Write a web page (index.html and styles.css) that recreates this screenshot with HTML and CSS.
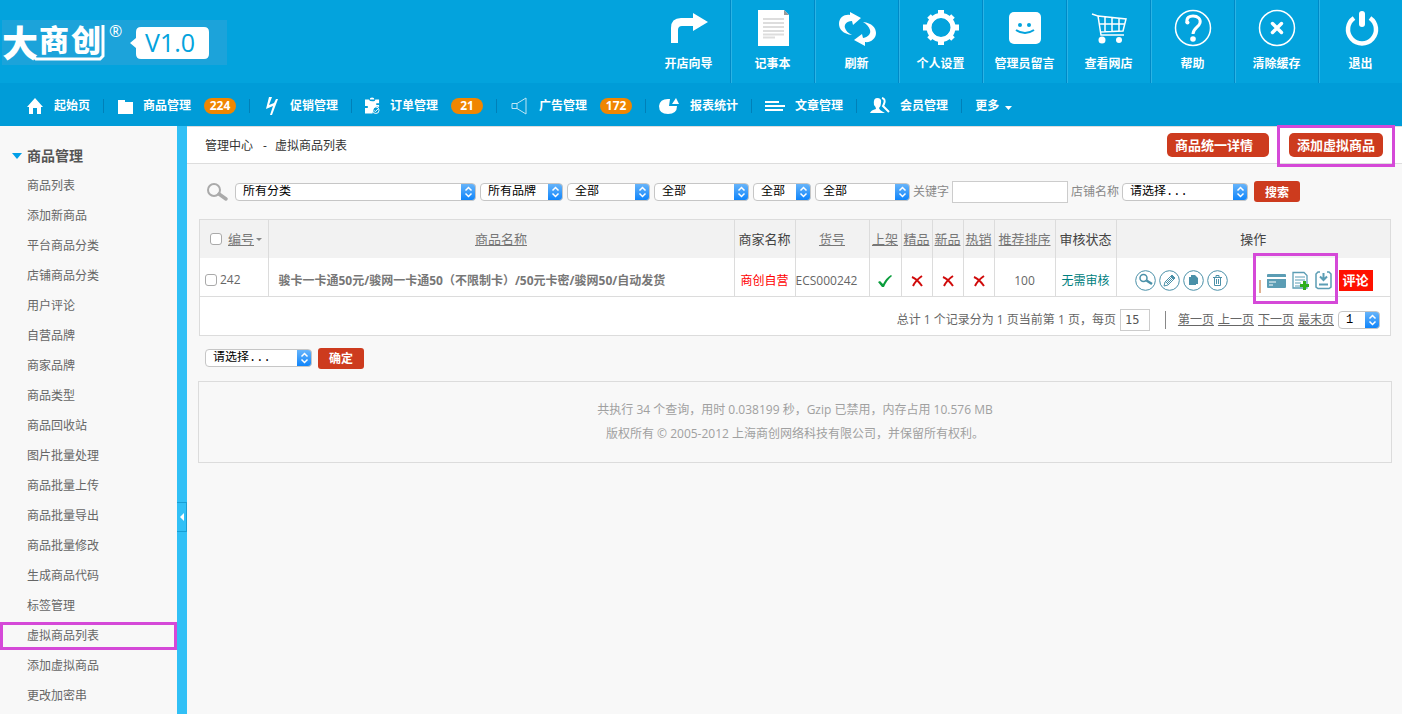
FILE: index.html
```html
<!DOCTYPE html>
<html lang="zh-CN">
<head>
    <meta charset="UTF-8">
    <meta name="viewport" content="width=device-width, initial-scale=1.0">
    <title>虚拟商品列表</title>
    <link rel="stylesheet" href="styles.css">
</head>
<body>

<header class="header">
    <div class="logo">
        <svg width="227" height="60" viewBox="0 0 227 60">
            <rect x="2" y="2" width="225" height="45" fill="#1ca3da"/>
            <text x="2" y="39" class="logo-big">大</text>
            <text x="39" y="33" class="logo-small">商</text>
            <text x="71" y="33" class="logo-small">创</text>
            <path d="M30 35l6 6h64l3-3V7" fill="none" stroke="#fff" stroke-width="3"/>
            <text x="109" y="19" class="logo-reg">®</text>
            <path d="M130 25l6-5V14q0-5 5-5h63q5 0 5 5v22q0 5-5 5h-63q-5 0-5-5v-6z" fill="#fff"/>
            <text x="145" y="34" class="logo-ver">V1.0</text>
        </svg>
    </div>
    <ul class="tools">
        <li><a href="#">
            <svg width="38" height="38" viewBox="0 0 38 38" fill="#fff"><path d="M1 34V19Q1 9 11 9H23V4L38 13 23 22V17H12Q8 17 8 21V34z"/></svg>
            <span>开店向导</span></a></li>
        <li><a href="#">
            <svg width="38" height="38" viewBox="0 0 38 38"><path d="M4 1H30L35 6V37H4z" fill="#fff"/><path d="M30 1V6H35z" fill="#999"/><path d="M9 10H30M9 14H30M9 18H30M9 22H30M9 25.500H30M9 28.500H21" stroke="#ddd" stroke-width="2"/></svg>
            <span>记事本</span></a></li>
        <li><a href="#">
            <svg width="38" height="38" viewBox="0 0 38 38" fill="#fff"><path d="M14 26C5 25 1 20 1 15 1 8 7 5 12 6L12 3 23 9 15 16 14 12C8 12 6 16 7 19 8 22 10 24 14 26z"/><path d="M25 13C34 14 38 19 38 24 38 30 32 34 27 33L27 37 16 31 24 25 25 29C31 28 33 24 32 21 31 18 29 15 25 13z"/></svg>
            <span>刷新</span></a></li>
        <li><a href="#">
            <svg width="38" height="38" viewBox="0 0 38 38"><g stroke="#fff" stroke-width="6"><path d="M19 1V9M19 29V36M1 18.500H9M29 18.500H37"/><path d="M7 7L12 12M26 25L31 30M7 30L12 25M26 12L31 7" stroke-width="5"/></g><circle cx="19" cy="18.500" r="12" fill="none" stroke="#fff" stroke-width="5"/></svg>
            <span>个人设置</span></a></li>
        <li><a href="#">
            <svg width="38" height="38" viewBox="0 0 38 38"><rect x="3" y="3" width="32" height="32" rx="5" fill="#fff"/><circle cx="14" cy="16" r="2" fill="#03a3dd"/><circle cx="23" cy="16" r="2" fill="#03a3dd"/><path d="M10 21Q19 27 28 21" fill="none" stroke="#03a3dd" stroke-width="2"/></svg>
            <span>管理员留言</span></a></li>
        <li><a href="#">
            <svg width="38" height="38" viewBox="0 0 38 38" fill="none" stroke="#fff" stroke-width="1.500"><path d="M2 5L8 7 11 26H34M8 7L36 10 33 22 10 23M9 15H35M15 8V23M22 9V23M29 9V22" /><circle cx="12" cy="31" r="3.500" fill="#fff" stroke="none"/><circle cx="29" cy="31" r="3" fill="#fff" stroke="none"/></svg>
            <span>查看网店</span></a></li>
        <li><a href="#">
            <svg width="38" height="38" viewBox="0 0 38 38"><circle cx="19" cy="19" r="17.500" fill="none" stroke="#fff" stroke-width="1.500"/><path d="M13 14C12 8 16 7 19 7 24 7 27 10 26 14 25 18 19 19 19 25" fill="none" stroke="#fff" stroke-width="3"/><circle cx="13.500" cy="13.500" r="2" fill="#fff"/><circle cx="19" cy="30" r="2.800" fill="#fff"/></svg>
            <span>帮助</span></a></li>
        <li><a href="#">
            <svg width="38" height="38" viewBox="0 0 38 38" fill="none" stroke="#fff"><circle cx="19" cy="19" r="17.500" stroke-width="1.500"/><path d="M14.500 14.500L23.500 23.500M23.500 14.500L14.500 23.500" stroke-width="3.500" stroke-linecap="round"/></svg>
            <span>清除缓存</span></a></li>
        <li><a href="#">
            <svg width="38" height="38" viewBox="0 0 38 38" fill="none" stroke="#fff"><path d="M12 9A14 14 0 1 0 28 9" stroke-width="4.500"/><path d="M20 5V15" stroke-width="6" stroke-linecap="round"/></svg>
            <span>退出</span></a></li>
    </ul>
</header>

<nav class="nav">
    <a href="#"><svg width="19" height="18" viewBox="0 0 19 18" fill="#fff"><path d="M10 1L18 10H16V17H12V11H8V17H4V10H2z"/></svg>起始页</a>
    <a href="#"><svg width="16" height="18" viewBox="0 0 16 18" fill="#fff"><path d="M1 3H8V5H16V17H1z"/></svg>商品管理<span class="badge">224</span></a>
    <a href="#"><svg width="17" height="18" viewBox="0 0 17 18" fill="#fff"><path d="M6 0H9L6 8 11 6 13 2 15 2 9 18 7 18 10 9 3 12z"/></svg>促销管理</a>
    <a href="#"><svg width="15" height="18" viewBox="0 0 16 18"><path d="M0 2H4Q5 4 8 4T11 2H15V6H12V8H15V10Q9 8 8 17H0V11H3V9H0z" fill="#fff"/><path d="M5 2Q5 0 7.500 0T10 2z" fill="#fff"/><circle cx="11.500" cy="13.500" r="3.500" fill="none" stroke="#fff"/><path d="M9.500 13.500L11 15 14 12" fill="none" stroke="#fff"/></svg>订单管理<span class="badge">21</span></a>
    <a href="#"><svg width="19" height="18" viewBox="0 0 19 18" fill="none" stroke="#bfe6f5"><path d="M2 6.500H7L16 1V17L7 11.500H2zM7 6.500V11.500"/></svg>广告管理<span class="badge">172</span></a>
    <a href="#"><svg width="21" height="18" viewBox="0 0 21 18" fill="#fff"><path d="M11 2Q1 1 0 9 0 17 9 17 18 17 18 9L10 9z"/><path d="M13 7L17 1 20 7z"/></svg>报表统计</a>
    <a href="#"><svg width="20" height="18" viewBox="0 0 20 18" stroke="#fff" stroke-width="2"><path d="M0 5H14M0 9H20M0 13H18"/></svg>文章管理</a>
    <a href="#"><svg width="20" height="18" viewBox="0 0 20 18"><path d="M7 1Q12 1 11 6 11 9 9 11 9 13 15 16H0Q1 13 6 12 6 10 4 8 3 1 7 1z" fill="#fff"/><path d="M12 1Q16 2 14 7L13 9 19 15" fill="none" stroke="#fff" stroke-width="2"/></svg>会员管理</a>
    <a href="#">更多<svg class="caret" width="7" height="4" viewBox="0 0 7 4" fill="#fff"><path d="M0 0H7L3.500 4z"/></svg></a>
</nav>

<div class="layout">
    <aside class="sidebar">
        <h2>商品管理</h2>
        <ul>
            <li><a href="#">商品列表</a></li>
            <li><a href="#">添加新商品</a></li>
            <li><a href="#">平台商品分类</a></li>
            <li><a href="#">店铺商品分类</a></li>
            <li><a href="#">用户评论</a></li>
            <li><a href="#">自营品牌</a></li>
            <li><a href="#">商家品牌</a></li>
            <li><a href="#">商品类型</a></li>
            <li><a href="#">商品回收站</a></li>
            <li><a href="#">图片批量处理</a></li>
            <li><a href="#">商品批量上传</a></li>
            <li><a href="#">商品批量导出</a></li>
            <li><a href="#">商品批量修改</a></li>
            <li><a href="#">生成商品代码</a></li>
            <li><a href="#">标签管理</a></li>
            <li class="marked"><a href="#">虚拟商品列表</a></li>
            <li><a href="#">添加虚拟商品</a></li>
            <li><a href="#">更改加密串</a></li>
        </ul>
    </aside>
    <div class="splitter"><button type="button" class="toggle" aria-label="收起菜单"></button></div>

    <main class="main">
        <div class="crumbs">
            <h1><a href="#">管理中心</a><span>-</span><span>虚拟商品列表</span></h1>
            <div class="actions">
                <a href="#" class="action wide">商品统一详情</a>
                <span class="marked"><a href="#" class="action">添加虚拟商品</a></span>
            </div>
        </div>

        <form class="search">
            <svg width="25" height="20" viewBox="0 0 25 20" fill="none" stroke="#aaa"><circle cx="8" cy="8" r="6" stroke-width="2"/><path d="M13 12L20 17" stroke-width="3.500" stroke-linecap="round"/></svg>
            <select class="w-category" aria-label="分类"><option>所有分类</option></select>
            <select class="w-medium" aria-label="品牌"><option>所有品牌</option></select>
            <select class="w-medium" aria-label="推荐"><option>全部</option></select>
            <select class="w-large" aria-label="商家"><option>全部</option></select>
            <select class="w-small" aria-label="上架"><option>全部</option></select>
            <select class="w-large" aria-label="审核"><option>全部</option></select>
            <label for="keyword">关键字</label>
            <input type="text" id="keyword" class="keyword">
            <label for="store">店铺名称</label>
            <select id="store" class="w-store"><option>请选择...</option></select>
            <button type="submit" class="button">搜索</button>
        </form>

        <div class="panel">
            <table class="goods">
                <colgroup>
                    <col class="c-id"><col><col class="c-mid"><col class="c-sn">
                    <col class="c-shelf"><col class="c-flag"><col class="c-flag"><col class="c-flag">
                    <col class="c-mid"><col class="c-mid"><col class="c-ops">
                </colgroup>
                <thead>
                    <tr>
                        <th class="id"><div><input type="checkbox" aria-label="全选"><a href="#">编号</a><i class="sort"></i></div></th>
                        <th><a href="#">商品名称</a></th>
                        <th>商家名称</th>
                        <th><a href="#">货号</a></th>
                        <th><a href="#">上架</a></th>
                        <th><a href="#">精品</a></th>
                        <th><a href="#">新品</a></th>
                        <th><a href="#">热销</a></th>
                        <th><a href="#">推荐排序</a></th>
                        <th>审核状态</th>
                        <th>操作</th>
                    </tr>
                </thead>
                <tbody>
                    <tr>
                        <td class="id"><label><input type="checkbox">242</label></td>
                        <td class="name">骏卡一卡通50元/骏网一卡通50（不限制卡）/50元卡密/骏网50/自动发货</td>
                        <td class="shop">商创自营</td>
                        <td class="sn">ECS000242</td>
                        <td><svg class="flag" width="14" height="14" viewBox="0 0 14 14"><path d="M0 8L2 7 5 10Q8 4 13 1L14 2Q9 6 6 13L4 13z" fill="#0a9d3c"/></svg></td>
                        <td><svg class="flag" width="14" height="14" viewBox="0 0 14 14"><path d="M2 3Q7 5 12 12M12 2Q6 6 3 12" fill="none" stroke="#d00b0b" stroke-width="2"/></svg></td>
                        <td><svg class="flag" width="14" height="14" viewBox="0 0 14 14"><path d="M2 3Q7 5 12 12M12 2Q6 6 3 12" fill="none" stroke="#d00b0b" stroke-width="2"/></svg></td>
                        <td><svg class="flag" width="14" height="14" viewBox="0 0 14 14"><path d="M2 3Q7 5 12 12M12 2Q6 6 3 12" fill="none" stroke="#d00b0b" stroke-width="2"/></svg></td>
                        <td>100</td>
                        <td class="audit">无需审核</td>
                        <td>
                            <div class="ops">
                                <a href="#" aria-label="查看"><svg width="21" height="21" viewBox="0 0 21 21" fill="none" stroke="#4a90a8"><circle cx="10.500" cy="10.500" r="9.800"/><circle cx="8.500" cy="8" r="3.500" stroke-width="1.500"/><path d="M11.500 10.500L17 14" stroke-width="2.500"/></svg></a>
                                <a href="#" aria-label="编辑"><svg width="21" height="21" viewBox="0 0 21 21" fill="none" stroke="#4a90a8"><circle cx="10.500" cy="10.500" r="9.800"/><path d="M5 16L6 12 13 5 16 8 9 15zM7 13L14 6M8 14L15 7M12 6L15 9"/></svg></a>
                                <a href="#" aria-label="复制"><svg width="21" height="21" viewBox="0 0 21 21"><circle cx="10.500" cy="10.500" r="9.800" fill="none" stroke="#4a90a8"/><path d="M8 5H12L15 8V14H8z M6 7H8V14H13V15H6z" fill="#4a90a8"/></svg></a>
                                <a href="#" aria-label="删除"><svg width="21" height="21" viewBox="0 0 21 21" fill="none" stroke="#4a90a8"><circle cx="10.500" cy="10.500" r="9.800"/><path d="M6 7.500H15M9 7V5.500H12V7M7.500 8V15.500H13.500V8M9.500 9V14M11.500 9V14"/></svg></a>
                                <span class="marked">
                                    <i class="bar"></i>
                                    <a href="#" aria-label="补货"><svg width="19" height="16" viewBox="0 0 19 16"><path d="M0 2Q0 1 1 1H18Q19 1 19 2V4H0zM0 6H19V14Q19 15 18 15H1Q0 15 0 14z" fill="#5b9db4"/><path d="M2 9H9M2 12H6" stroke="#fff"/></svg></a>
                                    <a href="#" aria-label="添加卡密"><svg width="17" height="19" viewBox="0 0 17 19"><path d="M1 1.500H12L15 4.500V17H1z" fill="none" stroke="#5b9db4" stroke-width="1.300"/><path d="M3 6H13M3 9H13M3 12H9M3 15H8" stroke="#5b9db4"/><path d="M11 10H14V13H17V16H14V19H11V16H8V13H11z" fill="#2fae1c"/></svg></a>
                                    <a href="#" aria-label="批量导入"><svg width="17" height="19" viewBox="0 0 17 19" fill="none" stroke="#5b9db4" stroke-width="1.500"><path d="M5 1H3L1 3V16L3 17.500H14L16 16V3L14 1H12"/><path d="M8.500 2V8M5 5.500L8.500 9 12 5.500M4 13.500H13" stroke-width="2"/></svg></a>
                                </span>
                                <a href="#" class="review">评论</a>
                            </div>
                        </td>
                    </tr>
                </tbody>
            </table>
            <div class="pager">
                <label for="pageSize">总计 1 个记录分为 1 页当前第 1 页，每页</label>
                <input type="text" id="pageSize" class="page-size" value="15">
                <span class="pages">
                    <a href="#">第一页</a>
                    <a href="#">上一页</a>
                    <a href="#">下一页</a>
                    <a href="#">最末页</a>
                </span>
                <select class="w-page" aria-label="页码"><option>1</option></select>
            </div>
        </div>

        <form class="batch">
            <select class="w-batch" aria-label="批量操作"><option>请选择...</option></select>
            <button type="submit" class="button">确定</button>
        </form>

        <footer class="footer">
            <p>共执行 34 个查询，用时 0.038199 秒，Gzip 已禁用，内存占用 10.576 MB</p>
            <p>版权所有 © 2005-2012 上海商创网络科技有限公司，并保留所有权利。</p>
        </footer>
    </main>
</div>

</body>
</html>
```

FILE: styles.css
```css
* {
    box-sizing: border-box;
}
body {
    margin: 0;
    min-height: 100vh;
    display: flex;
    flex-direction: column;
    font-family: "Open Sans", "Noto Sans CJK SC", sans-serif;
    font-size: 12px;
    line-height: 18px;
    color: #666;
    background-color: #f8f8f8;
}
a {
    color: inherit;
    text-decoration: none;
}
ul, p, h1, h2 {
    margin: 0;
    padding: 0;
    list-style: none;
}
svg {
    display: block;
    flex: none;
}

/* top bar */
.header {
    display: flex;
    justify-content: space-between;
    height: 83px;
    background-color: #03a3dd;
    color: #fff;
}
.logo {
    padding-top: 18px;
}
.logo text {
    fill: #fff;
    font-weight: 900;
}
.logo .logo-big {
    font-size: 36px;
}
.logo .logo-small {
    font-size: 30px;
}
.logo .logo-reg {
    font-size: 16px;
    font-weight: 400;
}
.logo .logo-ver {
    font-size: 25px;
    font-weight: 400;
    fill: #03a3dd;
}
.tools {
    display: flex;
}
.tools li {
    width: 84px;
    border-left: 1px solid #0089c6;
    box-shadow: inset 1px 0 #2cb3e4;
}
.tools li:first-child {
    border-left-color: transparent;
    box-shadow: none;
}
.tools a {
    display: flex;
    flex-direction: column;
    align-items: center;
    gap: 8px;
    padding-top: 9px;
    font-weight: bold;
    white-space: nowrap;
}

/* main navigation */
.nav {
    display: flex;
    align-items: center;
    height: 43px;
    padding: 2px 0 0 12px;
    background-color: #009cd8;
    color: #fff;
    font-weight: bold;
}
.nav a {
    display: flex;
    align-items: center;
    height: 14px;
    padding: 0 13px;
    border-right: 1px solid #0080b8;
    white-space: nowrap;
}
.nav a:last-child {
    border-right: none;
}
.nav svg {
    margin-right: 10px;
}
.nav .caret {
    margin: 4px 0 0 6px;
}
.badge {
    width: 32px;
    margin-left: 13px;
    border-radius: 8px;
    background-color: #f08600;
    font-size: 12px;
    line-height: 16px;
    text-align: center;
}

/* sidebar */
.layout {
    display: flex;
    flex: 1;
}
.sidebar {
    width: 177px;
    padding-top: 15px;
    flex: none;
}
.sidebar h2 {
    display: flex;
    align-items: center;
    gap: 5px;
    padding-left: 12px;
    font-size: 14px;
    line-height: 30px;
    color: #555;
}
.sidebar h2::before {
    content: "";
    border: 5px solid transparent;
    border-top: 6px solid #009fe8;
    border-bottom: none;
}
.sidebar li {
    padding-left: 27px;
    line-height: 30px;
}
.marked {
    position: relative;
}
.marked::after {
    content: "";
    position: absolute;
    inset: 0;
    border: 3px solid #d549d8;
    pointer-events: none;
}
.sidebar .marked::after {
    inset: 1px 0;
}
.splitter {
    position: relative;
    width: 10px;
    flex: none;
    background-color: #31c0f6;
}
.toggle {
    position: absolute;
    top: 64%;
    width: 10px;
    height: 30px;
    padding: 0 0 0 3px;
    border: 1px solid #189fd5;
    border-left: none;
    background: none;
}
.toggle::before {
    content: "";
    display: block;
    border: 4px solid transparent;
    border-right-color: #fff;
    border-left: none;
    width: 0;
}

/* content */
.main {
    flex: 1;
    min-width: 0;
}
.crumbs {
    display: flex;
    align-items: center;
    justify-content: space-between;
    height: 38px;
    padding: 0 19px 0 18px;
    background-color: #fff;
    border-top: 1px solid #ddd;
    border-bottom: 1px solid #ddd;
}
.crumbs h1 {
    display: flex;
    gap: 8px;
    padding-top: 2px;
    font-size: 12px;
    font-weight: normal;
    color: #333;
}
.crumbs h1 a {
    margin-right: 2px;
}
.actions {
    display: flex;
    gap: 20px;
}
.action {
    display: block;
    padding: 0 8px;
    border-radius: 5px;
    background-color: #cd3b1e;
    color: #fff;
    font-size: 13px;
    font-weight: bold;
    line-height: 24px;
}
.wide {
    padding-right: 16px;
}
.actions .marked::after {
    inset: -8px -12px -10px;
}
select {
    height: 18px;
    padding: 1px 16px 0 7px;
    border: 1px solid #c6c6c6;
    border-radius: 4px;
    appearance: none;
    background: url("data:image/svg+xml,%3Csvg xmlns='http://www.w3.org/2000/svg' width='15' height='18' fill='none' stroke='white' stroke-width='1.500'%3E%3Cpath d='M4.500 7.500L7.500 4.500L10.500 7.500M4.500 10.500L7.500 13.500L10.500 10.500'/%3E%3C/svg%3E") right center / 15px 18px no-repeat border-box,
        linear-gradient(#6cb7fa, #0a82fb) right / 15px 100% no-repeat border-box,
        #fff;
    color: #000;
    font-family: "Liberation Mono", "Noto Sans CJK SC", monospace;
    font-size: 12px;
    line-height: 15px;
}
input[type="text"] {
    height: 22px;
    padding: 0 4px;
    border: 1px solid #ccc;
    background-color: #fff;
    color: #555;
    font-family: "DejaVu Sans Mono", monospace;
    font-size: 12px;
}
input[type="checkbox"] {
    width: 12px;
    height: 12px;
    margin: 0;
    border: 1px solid #aaa;
    border-radius: 3px;
    appearance: none;
    background-color: #fff;
}
.button {
    width: 46px;
    height: 21px;
    padding: 0;
    border: none;
    border-radius: 3px;
    background-color: #cd3b1e;
    color: #fff;
    font-family: inherit;
    font-size: 12px;
    font-weight: bold;
}
.search {
    display: flex;
    align-items: center;
    gap: 4px;
    height: 55px;
    padding: 0 11px 0 19px;
    color: #888;
}
.search label {
    margin: 0 -1px;
    white-space: nowrap;
}
.search .button {
    margin-left: 2px;
}
.w-category {
    width: 241px;
}
.w-medium {
    width: 83px;
}
.w-large {
    width: 95px;
}
.w-small {
    width: 58px;
}
.w-store {
    width: 126px;
}
.w-batch {
    width: 107px;
}
.w-page {
    width: 42px;
}
.keyword {
    width: 116px;
}

/* goods table */
.panel {
    margin: 0 11px 0 12px;
    border: 1px solid #dcdcdc;
    background-color: #fff;
}
.goods {
    width: 100%;
    table-layout: fixed;
    border-collapse: collapse;
}
.c-id {
    width: 68px;
}
.c-mid {
    width: 61px;
}
.c-sn {
    width: 74px;
}
.c-shelf {
    width: 32px;
}
.c-flag {
    width: 31px;
}
.c-ops {
    width: 274px;
}
.goods th,
.goods td {
    padding: 0;
    border-right: 1px solid #dcdcdc;
    text-align: center;
    white-space: nowrap;
}
.goods th:last-child,
.goods td:last-child {
    border-right: none;
}
.goods th {
    height: 38px;
    background-color: #f2f2f2;
    color: #444;
    font-size: 13px;
    font-weight: normal;
}
.goods th a {
    color: #777;
    text-decoration: underline;
}
.goods td {
    height: 38px;
    padding-top: 8px;
    border-bottom: 1px solid #dcdcdc;
}
.goods th.id div {
    display: flex;
    align-items: center;
    gap: 6px;
    padding-left: 10px;
}
.sort {
    margin-left: -4px;
    border: 3px solid transparent;
    border-top-color: #888;
    border-bottom: none;
}
.goods td.id {
    padding-top: 6px;
}
.goods .id label {
    display: flex;
    align-items: center;
    gap: 3px;
    padding-left: 5px;
}
.goods .name {
    padding-left: 10px;
    text-align: left;
    font-weight: bold;
    color: #777;
}
.goods .shop {
    color: #f00;
}
.goods .sn {
    text-align: left;
}
.goods .audit {
    color: #008080;
}
.flag {
    margin: 0 auto;
}
.ops {
    display: flex;
    align-items: center;
    gap: 3px;
    padding-left: 18px;
}
.ops .marked {
    display: flex;
    align-items: center;
    gap: 6px;
    padding: 0 4px;
    margin-left: 24px;
}
.ops .marked::after {
    inset: -15px -2px -11px;
}
.bar {
    flex: none;
    width: 2px;
    height: 13px;
    margin-top: 12px;
    background-color: #e0b090;
}
.review {
    padding: 0 4px;
    background-color: #f10;
    color: #fff;
    font-size: 13px;
    font-weight: bold;
    line-height: 21px;
}
.pager {
    display: flex;
    align-items: center;
    justify-content: flex-end;
    gap: 4px;
    height: 38px;
    padding: 8px 10px 0 0;
}
.pages {
    display: flex;
    gap: 4px;
    margin-left: 11px;
    padding-left: 12px;
    border-left: 1px solid #888;
}
.pages a {
    text-decoration: underline;
}
.page-size {
    width: 30px;
}
.batch {
    display: flex;
    align-items: center;
    gap: 6px;
    padding: 12px 18px;
}
.footer {
    margin: 0 10px 0 11px;
    padding: 16px;
    border: 1px solid #dcdcdc;
    color: #a0a0a0;
    line-height: 24px;
    text-align: center;
}
```
